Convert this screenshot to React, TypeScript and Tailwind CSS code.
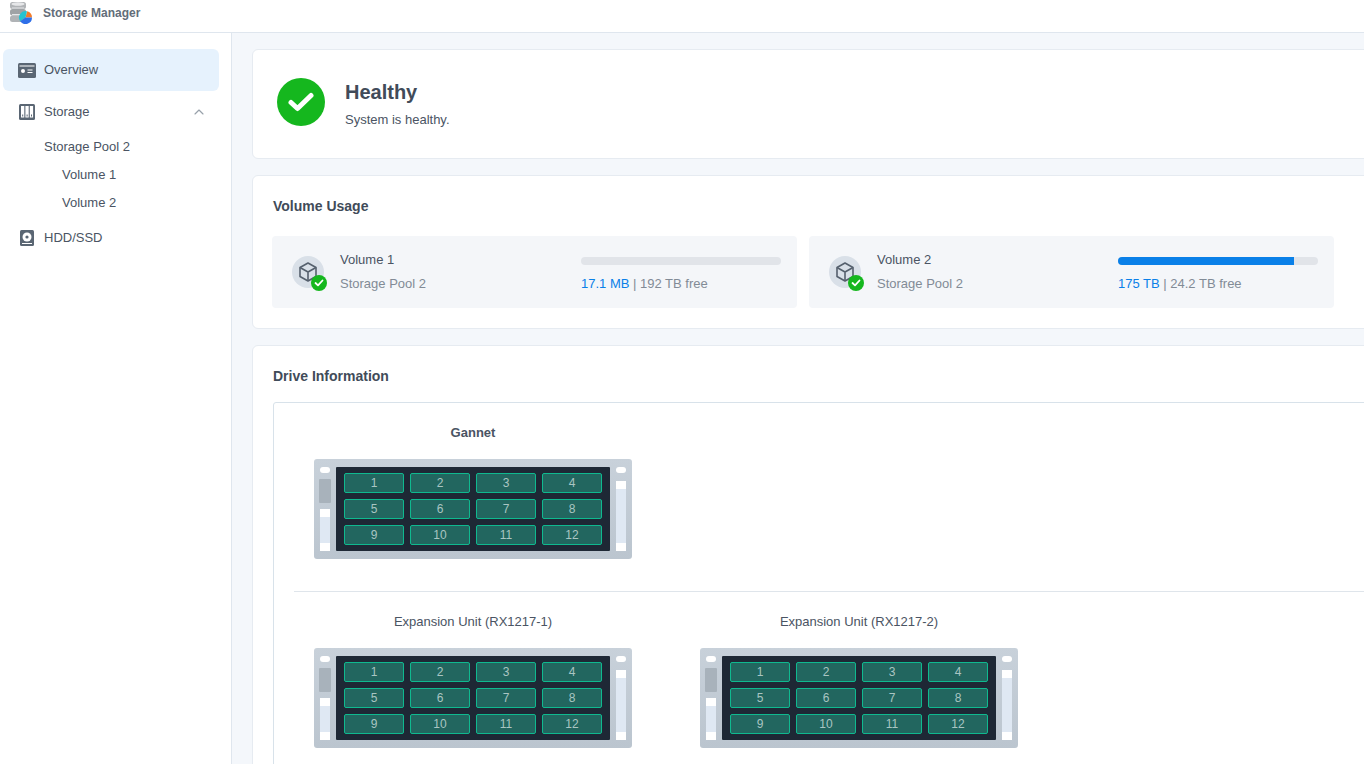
import React from 'react';
import { ChevronUp } from 'lucide-react';

const slots = [1, 2, 3, 4, 5, 6, 7, 8, 9, 10, 11, 12];

const Logo = () => (
  <svg width="24" height="24" viewBox="0 0 24 24">
    <rect x="1" y="2" width="16" height="7" rx="2.5" fill="#b0b3b6" />
    <rect x="1" y="9" width="16" height="6.5" rx="2.5" fill="#9fa3a6" />
    <rect x="1" y="15.5" width="16" height="6.5" rx="2.5" fill="#b0b3b6" />
    <ellipse cx="9" cy="4" rx="6.5" ry="1.8" fill="#e6e7e9" />
    <rect x="3" y="7.5" width="12" height="1" fill="#e6e7e9" />
    <rect x="3" y="14" width="12" height="1" fill="#e6e7e9" />
    <path d="M18 11.2a6.5 6.5 0 0 1 5 6.3h-6.500z" fill="#f47b2a" />
    <path d="M18 11.200 16.500 17.500l-5.300 3.800a6.500 6.500 0 0 1 6.800-10.100z" fill="#27c3d0" />
    <path d="M23 17.500a6.500 6.500 0 0 1-11.800 3.800l5.300-3.800z" fill="#2f6fe8" />
  </svg>
);

const OverviewIcon = () => (
  <svg width="18" height="15" viewBox="0 0 18 15">
    <rect width="18" height="15" rx="1.500" fill="#5a6673" />
    <rect x="1.500" y="2.500" width="15" height="1" fill="#fff" />
    <circle cx="5" cy="8" r="2" fill="#fff" />
    <rect x="9.500" y="6.500" width="5" height="1" fill="#fff" />
    <rect x="9.500" y="9" width="5" height="1" fill="#fff" />
  </svg>
);

const StorageIcon = () => (
  <svg width="16" height="16" viewBox="0 0 16 16">
    <rect width="16" height="16" rx="1.500" fill="#5a6673" />
    <rect x="2" y="2" width="3.300" height="11.500" fill="#fff" />
    <rect x="6.400" y="2" width="3.300" height="11.500" fill="#fff" />
    <rect x="10.800" y="2" width="3.300" height="11.500" fill="#fff" />
    <rect x="3.200" y="10.500" width="1" height="2" fill="#5a6673" />
    <rect x="7.600" y="10.500" width="1" height="2" fill="#5a6673" />
    <rect x="12" y="10.500" width="1" height="2" fill="#5a6673" />
  </svg>
);

const DiskIcon = () => (
  <svg width="14" height="16" viewBox="0 0 14 16">
    <rect width="14" height="16" rx="1.500" fill="#5a6673" />
    <circle cx="7" cy="7" r="4.500" fill="#fff" />
    <circle cx="7" cy="7" r="1.600" fill="#5a6673" />
    <rect x="2" y="13" width="10" height="1" fill="#fff" />
  </svg>
);

const VolumeIcon = () => (
  <div className="relative w-8 h-8 rounded-full bg-[#d9e0e8] flex items-center justify-center shrink-0">
    <svg width="18" height="20" viewBox="0 0 18 20" fill="none" stroke="#55606d" strokeWidth="1.600" strokeLinejoin="round">
      <path d="M9 1 17 5.500v9L9 19 1 14.500v-9z" />
      <path d="M1 5.500 9 10l8-4.500M9 10v9" />
    </svg>
    <div className="absolute left-[19px] top-[19px] w-4 h-4 rounded-full bg-[#15b71e] flex items-center justify-center">
      <svg width="10" height="8" viewBox="0 0 10 8" fill="none" stroke="#fff" strokeWidth="1.800" strokeLinecap="round" strokeLinejoin="round">
        <path d="M1.500 4 4 6.300 8.500 1.500" />
      </svg>
    </div>
  </div>
);

const Rack = () => (
  <div className="w-[318px] h-[100px] rounded-[3px] bg-linear-to-b from-[#c8d1da] to-[#bbc5cf] flex pt-2 pl-[5px]">
    <div className="w-[12px] flex flex-col items-center">
      <div className="w-[10px] h-[6px] rounded-full bg-white" />
      <div className="w-[12px] h-[24px] mt-[6px] rounded-[1px] bg-[#a8b2bb]" />
      <div className="w-[10px] h-[42px] mt-[6px] border-y-[8px] border-white bg-[#dfe8f3]" />
    </div>
    <div className="w-[274px] h-[84px] ml-[5px] rounded-[1px] bg-[#1e2835] grid grid-cols-4 gap-[6px] px-2 pt-[6px] content-start">
      {slots.map((n) => (
        <div
          key={n}
          className="h-[20px] rounded-[2px] border border-[#0fb98f] bg-[#22665f] text-[#a9c5c2] text-xs leading-[18px] text-center"
        >
          {n}
        </div>
      ))}
    </div>
    <div className="w-[10px] ml-[6px] flex flex-col items-center">
      <div className="w-[10px] h-[6px] rounded-full bg-white" />
      <div className="w-[10px] h-[70px] mt-[8px] border-y-[8px] border-white bg-[#dfe8f3]" />
    </div>
  </div>
);

const volumes = [
  { name: 'Volume 1', used: '17.1 MB', free: '192 TB free', pct: 0 },
  { name: 'Volume 2', used: '175 TB', free: '24.2 TB free', pct: 88 },
];

export default function App() {
  return (
    <div className="w-[1364px] h-[764px] overflow-hidden bg-[#f4f7fb] text-[13px] text-[#4a5463] font-['Liberation_Sans',Arial,sans-serif]">
      <header className="h-[33px] bg-white border-b border-[#dfe6ee] flex items-start pl-[9px]">
        <Logo />
        <span className="ml-[10px] mt-[5px] text-xs leading-[16px] font-bold text-[#636d79]">Storage Manager</span>
      </header>
      <div className="flex h-[731px]">
        <aside className="w-[232px] shrink-0 bg-white border-r border-[#dfe6ee] pt-4 pl-[3px]">
          <div className="w-[216px] h-[42px] rounded-[6px] bg-[#e6f2fd] flex items-center pl-[15px]">
            <OverviewIcon />
            <span className="ml-2">Overview</span>
          </div>
          <div className="w-[216px] h-[42px] flex items-center pl-[16px] pr-[12px]">
            <StorageIcon />
            <span className="ml-[9px]">Storage</span>
            <ChevronUp className="ml-auto text-[#98a1aa]" size={16} strokeWidth={1.750} />
          </div>
          <div className="pl-[41px] leading-[28px]">
            <div>Storage Pool 2</div>
            <div className="pl-[18px]">Volume 1</div>
            <div className="pl-[18px]">Volume 2</div>
          </div>
          <div className="w-[216px] h-[42px] flex items-center pl-[17px]">
            <DiskIcon />
            <span className="ml-[10px]">HDD/SSD</span>
          </div>
        </aside>
        <main className="flex-1 pl-5 pt-4 flex flex-col gap-4 min-w-0">
          <section className="w-[1200px] h-[110px] shrink-0 bg-white border border-[#e6ebf1] rounded-[6px] flex items-center pl-6">
            <div className="w-12 h-12 mb-1 rounded-full bg-[#15b71e] flex items-center justify-center">
              <svg width="26" height="20" viewBox="0 0 26 20" fill="none" stroke="#fff" strokeWidth="5" strokeLinecap="round" strokeLinejoin="round">
                <path d="M3 10.500 9.500 16.500 23 3.500" />
              </svg>
            </div>
            <div className="ml-5 mb-[2px]">
              <div className="text-xl leading-[28px] font-bold text-[#414b59]">Healthy</div>
              <div className="mt-[5px] leading-[18px]">System is healthy.</div>
            </div>
          </section>
          <section className="w-[1200px] h-[154px] shrink-0 bg-white border border-[#e6ebf1] rounded-[6px] pl-[19px] pt-[14px]">
            <h2 className="text-sm leading-[32px] font-bold text-[#414b59] pl-[1px]">Volume Usage</h2>
            <div className="flex gap-3 mt-[14px]">
              {volumes.map((v) => (
                <div key={v.name} className="w-[525px] h-[72px] rounded-[4px] bg-[#f4f6f9] flex items-center pl-5">
                  <VolumeIcon />
                  <div className="ml-4 w-[241px] leading-[24px]">
                    <div>{v.name}</div>
                    <div className="text-[#828b96]">Storage Pool 2</div>
                  </div>
                  <div className="leading-[24px]">
                    <div className="h-[24px] pt-[2px] flex items-center">
                      <div className="w-[200px] h-2 rounded-full bg-[#e1e4e9] overflow-hidden">
                        <div className="h-full bg-[#0a80e8]" style={{ width: `${v.pct}%` }} />
                      </div>
                    </div>
                    <div className="text-[#828b96]">
                      <span className="text-[#0a80e8]">{v.used}</span> | {v.free}
                    </div>
                  </div>
                </div>
              ))}
            </div>
          </section>
          <section className="w-[1200px] h-[500px] shrink-0 bg-white border border-[#e6ebf1] rounded-[6px] pl-5 pt-[14px]">
            <h2 className="text-sm leading-[32px] font-bold text-[#414b59]">Drive Information</h2>
            <div className="mt-[10px] border border-[#d8e2ea] rounded-[3px] pl-5 pt-[21px] h-[500px]">
              <div className="pl-5">
                <div className="w-[318px] text-center font-bold leading-[18px]">Gannet</div>
                <div className="mt-[17px]">
                  <Rack />
                </div>
              </div>
              <div className="border-t border-[#dfe5eb] mt-8 pt-[21px] pl-5 flex gap-[68px]">
                {['Expansion Unit (RX1217-1)', 'Expansion Unit (RX1217-2)'].map((label) => (
                  <div key={label}>
                    <div className="w-[318px] text-center leading-[18px]">{label}</div>
                    <div className="mt-[17px]">
                      <Rack />
                    </div>
                  </div>
                ))}
              </div>
            </div>
          </section>
        </main>
      </div>
    </div>
  );
}
